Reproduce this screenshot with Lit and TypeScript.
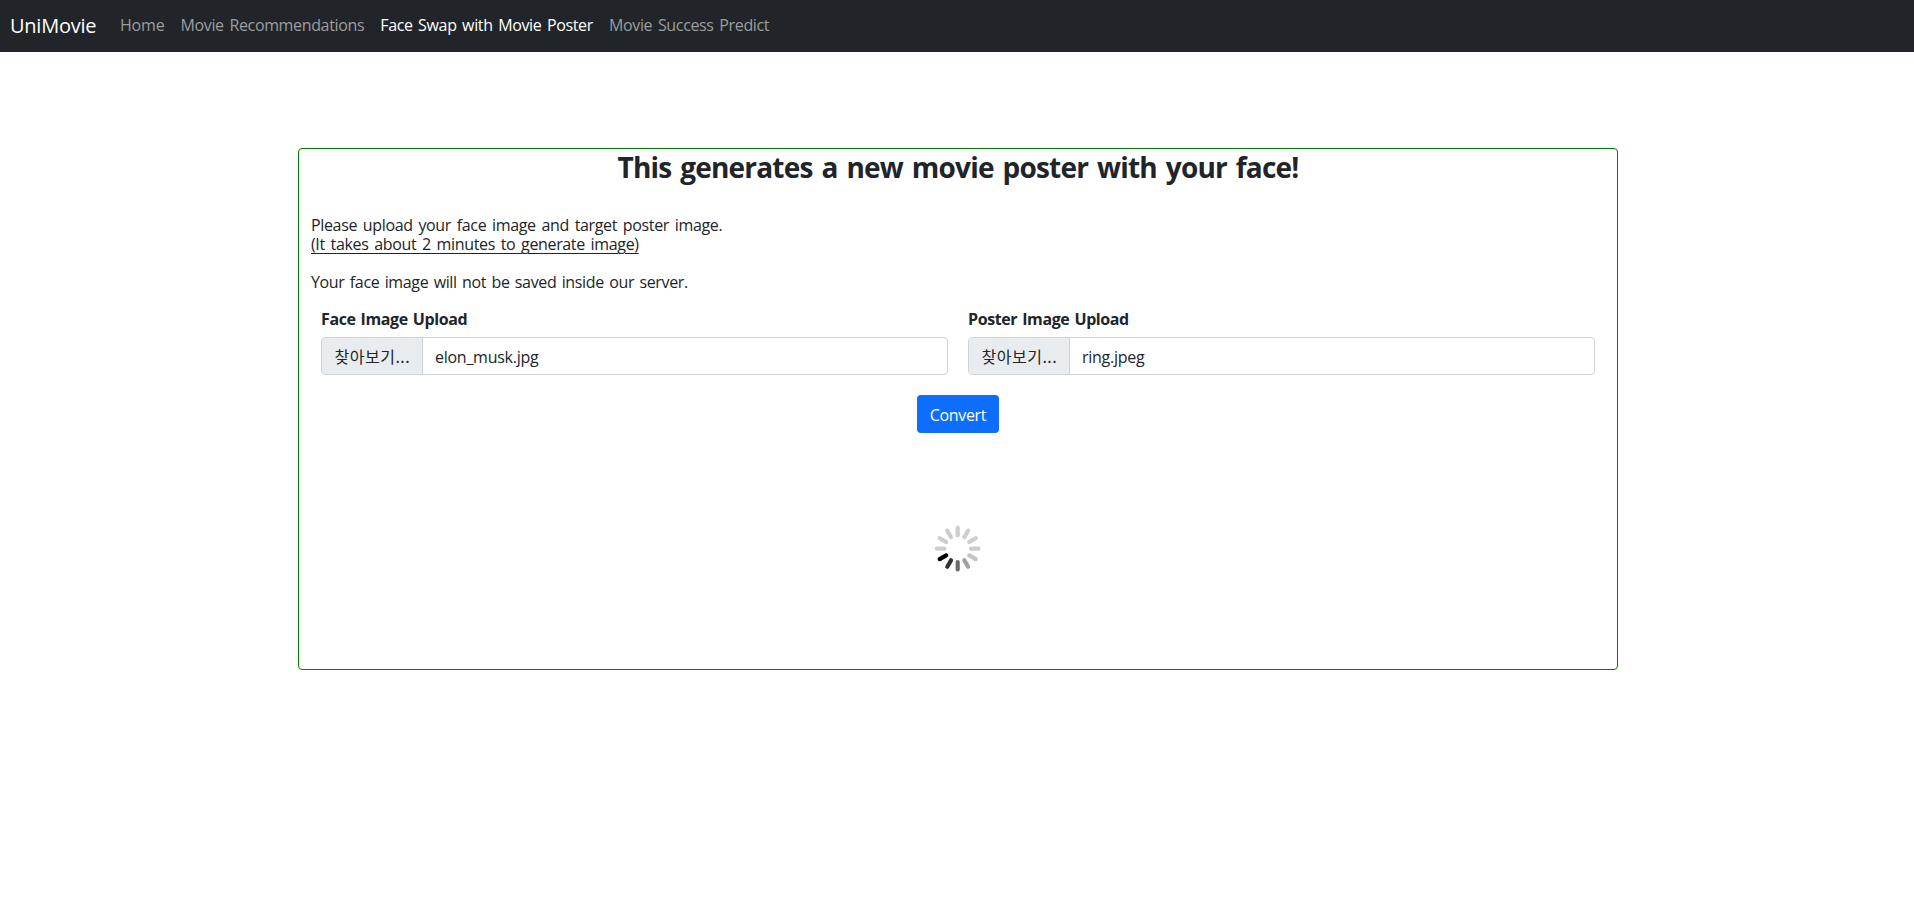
import { LitElement, html, svg, css } from "lit";
import { customElement, property } from "lit/decorators.js";
import { classMap } from "lit/directives/class-map.js";

@customElement("nav-bar")
class NavBar extends LitElement {
  static styles = css`
    :host { display: flex; align-items: center; box-sizing: border-box; height: 52px; padding: 0 10px 2px; background: #212529; color: #fff; white-space: nowrap; }
    .brand { padding-top: 1px; font-size: 20px; line-height: 30px; letter-spacing: -0.25px; width: 102px; }
    nav { display: flex; }
    .link { padding: 0 8px; line-height: 24px; color: #9b9d9e; letter-spacing: -0.35px; word-spacing: 1.9px; }
    .active { color: #fff; word-spacing: 1.7px; }
    .link:first-child { letter-spacing: -0.2px; }
  `;
  render() {
    const links = ["Home", "Movie Recommendations", "Face Swap with Movie Poster", "Movie Success Predict"];
    return html`<span class="brand">UniMovie</span>
      <nav>${links.map((l, i) => html`<a class=${classMap({ link: true, active: i === 2 })}>${l}</a>`)}</nav>`;
  }
}

@customElement("file-field")
class FileField extends LitElement {
  static styles = css`
    :host { display: block; flex: 1; }
    .label { display: block; font-weight: 700; line-height: 19px; margin-bottom: 8px; letter-spacing: -0.4px; word-spacing: 1.3px; }
    .control { display: flex; box-sizing: border-box; height: 38px; border: 1px solid #ced4da; border-radius: 4px; overflow: hidden; background: #fff; line-height: 24px; }
    .browse { box-sizing: border-box; width: 101px; padding: 6px 0 0 12.5px; background: #e9ecef; border-right: 1px solid #ced4da; font-family: "Noto Sans CJK KR", sans-serif; letter-spacing: 0.5px; white-space: nowrap; }
    .name { padding: 7px 12px 0; letter-spacing: -0.27px; }
  `;
  @property() label = "";
  @property() file = "";
  render() {
    return html`<span class="label">${this.label}</span>
      <div class="control"><span class="browse">찾아보기...</span><span class="name">${this.file}</span></div>`;
  }
}

@customElement("loading-spinner")
class LoadingSpinner extends LitElement {
  static styles = css`
    :host { display: block; }
    svg { display: block; }
    line { stroke-width: 4.2; stroke-linecap: round; }
  `;
  render() {
    const shades = ["#cdcdcd", "#cdcdcd", "#cdcdcd", "#cbcbcb", "#c4c4c4", "#a0a0a0", "#6b6b6b", "#333", "#000", "#cdcdcd", "#cdcdcd", "#cdcdcd"];
    return html`<svg width="48" height="48" viewBox="-23.7 -23.7 48 48">
      ${shades.map((c, i) => svg`<line x1="0" y1="-13.3" x2="0" y2="-20.8" stroke=${c} transform=${`rotate(${i * 30})`} />`)}
    </svg>`;
  }
}

@customElement("app-root")
class AppRoot extends LitElement {
  static styles = css`
    :host { display: block; min-height: 100vh; background: #fff; color: #212529; font: 16px/19px "Open Sans", "Noto Sans CJK KR", sans-serif; }
    .card { box-sizing: border-box; width: 1320px; height: 522px; margin: 96px 0 0 298px; border: 1px solid #008000; border-radius: 4px; }
    h1 { margin: 0; padding-top: 1px; font-size: 28px; line-height: 34px; font-weight: 700; text-align: center; letter-spacing: -0.8px; word-spacing: 2.4px; }
    .intro { margin: 32px 0 0 12px; letter-spacing: -0.35px; word-spacing: 1.95px; }
    .intro p { margin: 0; }
    .time { text-decoration: underline; text-decoration-thickness: 1px; text-underline-offset: 3px; }
    .intro .note { margin-top: 19px; word-spacing: 1.5px; }
    .fields { display: flex; gap: 20px; margin: 18px 22px 0; }
    .actions { display: flex; justify-content: center; margin-top: 20px; }
    button { box-sizing: border-box; width: 82px; height: 38px; padding: 2px 0 0; border: 0; border-radius: 4px; background: #0d6efd; color: #fff; font: inherit; letter-spacing: -0.33px; }
    .loading { display: flex; justify-content: center; margin-top: 92px; }
  `;
  render() {
    return html`<nav-bar></nav-bar>
      <main class="card">
        <h1>This generates a new movie poster with your face!</h1>
        <section class="intro">
          <p>Please upload your face image and target poster image.</p>
          <p><span class="time">(It takes about 2 minutes to generate image)</span></p>
          <p class="note">Your face image will not be saved inside our server.</p>
        </section>
        <div class="fields">
          <file-field label="Face Image Upload" file="elon_musk.jpg"></file-field>
          <file-field label="Poster Image Upload" file="ring.jpeg"></file-field>
        </div>
        <div class="actions"><button>Convert</button></div>
        <div class="loading"><loading-spinner></loading-spinner></div>
      </main>`;
  }
}
